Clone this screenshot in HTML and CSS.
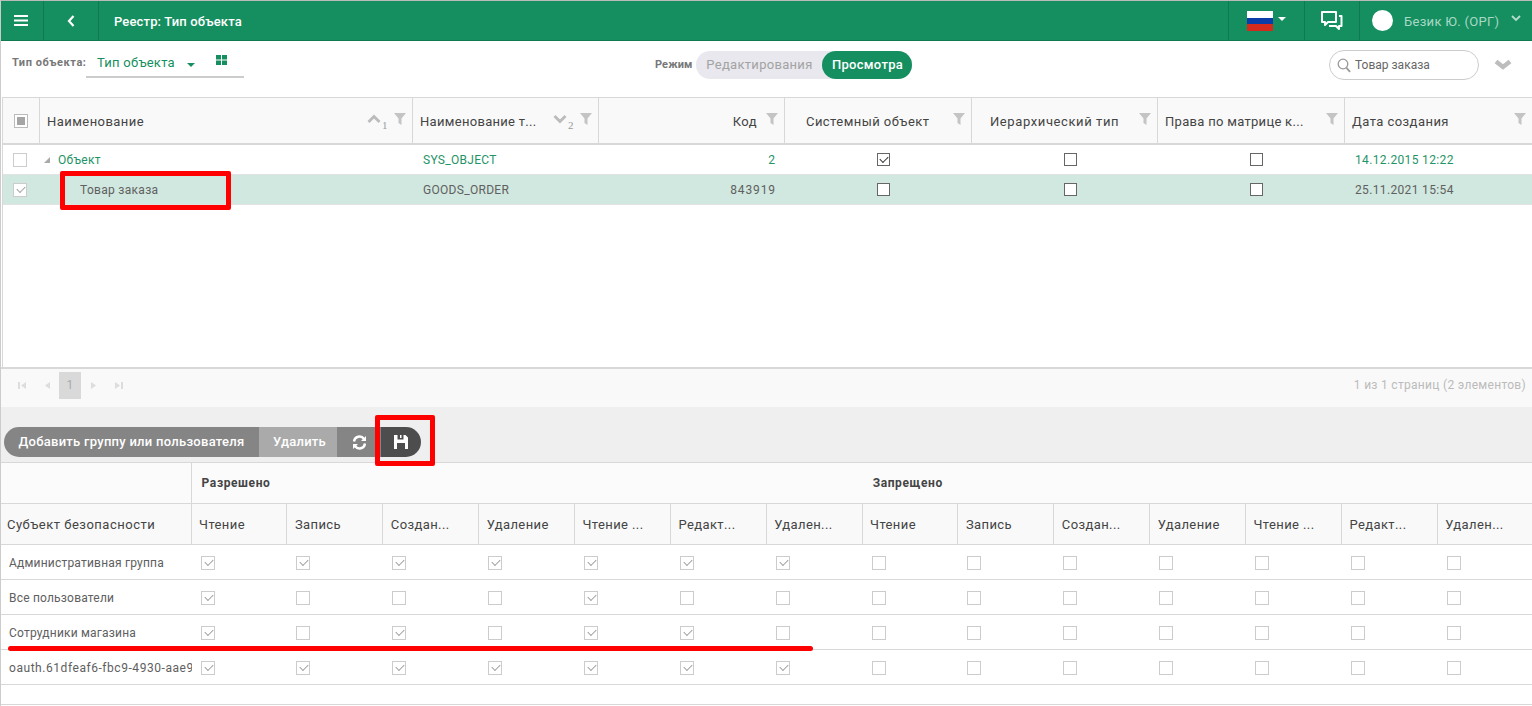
FILE: index.html
```html
<!DOCTYPE html>
<html lang="ru">
<head>
  <meta charset="UTF-8" />
  <title>Реестр: Тип объекта</title>
  <link rel="stylesheet" href="styles.css">
</head>
<body>

  <header class="topbar">
    <div class="bar-cell menu-cell">
      <svg width="14" height="11" viewBox="0 0 14 11"><path d="M0 0h14v2H0zM0 4.500h14v2H0zM0 9h14v2H0z" fill="#fff"/></svg>
    </div>
    <div class="bar-cell back-cell">
      <svg width="8" height="12" viewBox="0 0 8 12"><path d="M6.500 1L2 6l4.500 5" fill="none" stroke="#fff" stroke-width="2.200"/></svg>
    </div>
    <div class="bar-title">Реестр: Тип объекта</div>
    <div class="bar-cell flag-cell">
      <svg width="26" height="20" viewBox="0 0 26 20"><rect width="26" height="7" fill="#fff"/><rect y="7" width="26" height="6" fill="#0b3da8"/><rect y="13" width="26" height="7" fill="#d52b1e"/></svg>
      <span class="caret-white"></span>
    </div>
    <div class="bar-cell chat-cell">
      <svg width="23" height="22" viewBox="0 0 23 22" fill="none" stroke="#fff" stroke-width="2" stroke-linejoin="round"><path d="M2 2h14v10H8l-3 3v-3H2z"/><path d="M19 6h2.500v10H19v3l-3-3H9"/></svg>
    </div>
    <div class="user-cell">
      <span class="avatar"></span>
      <span class="user-name">Безик Ю. (ОРГ)</span>
      <svg width="10" height="7" viewBox="0 0 10 7"><path d="M1 1l4 4 4-4" fill="none" stroke="#b5dccd" stroke-width="1.800"/></svg>
    </div>
  </header>

  <div class="toolbar">
    <div class="type-picker">
      <span class="tool-label">Тип объекта:</span>
      <div class="type-select">
        <span class="type-value">Тип объекта</span>
        <span class="caret-green"></span>
        <svg class="grid-icon" width="11" height="10" viewBox="0 0 11 10"><path d="M0 0h5v4.500H0zM6 0h5v4.500H6zM0 5.500h5V10H0zM6 5.500h5V10H6z" fill="#158f60"/></svg>
      </div>
    </div>
    <div class="mode">
      <span class="tool-label">Режим</span>
      <div class="mode-switch">
        <span class="mode-off">Редактирования</span>
        <span class="mode-on">Просмотра</span>
      </div>
    </div>
    <div class="search-box">
      <svg width="14" height="15" viewBox="0 0 14 15" fill="none" stroke="#999" stroke-width="1.300"><circle cx="6" cy="6" r="4.800"/><path d="M9.500 9.800l3.500 4" stroke-width="1.800"/></svg>
      <span>Товар заказа</span>
    </div>
    <svg class="collapse-icon" width="18" height="11" viewBox="0 0 18 11"><path d="M2 2.500L9 8 16 2.500" fill="none" stroke="#bdbdbd" stroke-width="4.400"/></svg>
  </div>

  <!-- верхняя таблица -->
  <section class="types">
    <div class="types-row types-head">
      <div class="th center"><span class="cb cb-all"></span></div>
      <div class="th"><span class="th-text">Наименование</span><span class="sort"><svg width="14" height="10" viewBox="0 0 14 10"><path d="M1.500 8L7 2.500 12.500 8" fill="none" stroke="#bbb" stroke-width="2.800"/></svg><i>1</i></span><svg class="funnel" width="12" height="12"><use href="#funnel"/></svg></div>
      <div class="th"><span class="th-text th-cut">Наименование т...</span><span class="sort"><svg width="14" height="10" viewBox="0 0 14 10"><path d="M1.500 2L7 7.500 12.500 2" fill="none" stroke="#bbb" stroke-width="2.800"/></svg><i>2</i></span><svg class="funnel" width="12" height="12"><use href="#funnel"/></svg></div>
      <div class="th th-right"><span class="th-text">Код</span><svg class="funnel" width="12" height="12"><use href="#funnel"/></svg></div>
      <div class="th"><span class="th-text th-mid">Системный объект</span><svg class="funnel" width="12" height="12"><use href="#funnel"/></svg></div>
      <div class="th"><span class="th-text th-hier">Иерархический тип</span><svg class="funnel" width="12" height="12"><use href="#funnel"/></svg></div>
      <div class="th"><span class="th-text th-cut">Права по матрице к...</span><svg class="funnel" width="12" height="12"><use href="#funnel"/></svg></div>
      <div class="th"><span class="th-text">Дата создания</span><svg class="funnel" width="12" height="12"><use href="#funnel"/></svg></div>
    </div>
    <div class="types-body">
      <div class="types-row type-line link">
        <div class="td center row-check"><span class="cb cb-soft"></span></div>
        <div class="td"><span class="tree-arrow"></span>Объект</div>
        <div class="td code">SYS_OBJECT</div>
        <div class="td right num">2</div>
        <div class="td center flag"><span class="cb cb-dark on"></span></div>
        <div class="td center flag"><span class="cb cb-dark"></span></div>
        <div class="td center flag"><span class="cb cb-dark"></span></div>
        <div class="td date">14.12.2015 12:22</div>
      </div>
      <div class="types-row type-line selected">
        <div class="td center row-check"><span class="cb cb-soft on"></span></div>
        <div class="td child">Товар заказа</div>
        <div class="td code">GOODS_ORDER</div>
        <div class="td right num">843919</div>
        <div class="td center flag"><span class="cb cb-dark"></span></div>
        <div class="td center flag"><span class="cb cb-dark"></span></div>
        <div class="td center flag"><span class="cb cb-dark"></span></div>
        <div class="td date">25.11.2021 15:54</div>
      </div>
    </div>
  </section>

  <div class="pager">
    <div class="pager-nav">
      <svg width="9" height="9" viewBox="0 0 9 9"><path d="M0 1h2v7H0zM8 1v7L3 4.500z" fill="#ddd"/></svg>
      <svg class="pg-prev" width="6" height="9" viewBox="0 0 6 9"><path d="M5 1v7L0 4.500z" fill="#ddd"/></svg>
      <span class="pg-num">1</span>
      <svg class="pg-next" width="6" height="9" viewBox="0 0 6 9"><path d="M1 1v7l5-3.500z" fill="#ddd"/></svg>
      <svg class="pg-last" width="9" height="9" viewBox="0 0 9 9"><path d="M0 1v7l5-3.500zM6 1h2v7H6z" fill="#ddd"/></svg>
    </div>
    <span class="pager-info">1 из 1 страниц (2 элементов)</span>
  </div>

  <div class="actions">
    <div class="btn-group">
      <span class="btn btn-add">Добавить группу или пользователя</span>
      <span class="btn btn-del">Удалить</span>
      <span class="btn btn-sync">
        <svg width="15" height="15" viewBox="0 0 15 15" fill="none" stroke="#fff" stroke-width="2.400"><path d="M2 6.500A5.500 5.500 0 0 1 12 4"/><path d="M13 8.500A5.500 5.500 0 0 1 3 11"/><path d="M14 1v5H9zM1 14V9h5z" fill="#fff" stroke="none"/></svg>
      </span>
      <span class="btn btn-save">
        <svg width="14" height="14" viewBox="0 0 14 14"><path d="M0 0h11.500L14 2.500V14H0zM3.500 0v4.500h6V0H7.500v3H6V0zM3 8v6h8V8z" fill="#fff" fill-rule="evenodd"/></svg>
      </span>
    </div>
  </div>

  <!-- права -->
  <section class="perms">
    <div class="perm-groups">
      <div class="pg-blank"></div>
      <div class="pg-title">Разрешено</div>
      <div class="pg-title">Запрещено</div>
    </div>
    <div class="perm-row perm-head">
      <div>Субъект безопасности</div>
      <div>Чтение</div><div>Запись</div><div>Создан...</div><div>Удаление</div><div>Чтение ...</div><div>Редакт...</div><div>Удален...</div>
      <div>Чтение</div><div>Запись</div><div>Создан...</div><div>Удаление</div><div>Чтение ...</div><div>Редакт...</div><div>Удален...</div>
    </div>
    <div class="perm-row perm-line">
      <div class="subject">Административная группа</div>
      <div><span class="cb on"></span></div><div><span class="cb on"></span></div><div><span class="cb on"></span></div><div><span class="cb on"></span></div><div><span class="cb on"></span></div><div><span class="cb on"></span></div><div><span class="cb on"></span></div>
      <div><span class="cb"></span></div><div><span class="cb"></span></div><div><span class="cb"></span></div><div><span class="cb"></span></div><div><span class="cb"></span></div><div><span class="cb"></span></div><div><span class="cb"></span></div>
    </div>
    <div class="perm-row perm-line">
      <div class="subject">Все пользователи</div>
      <div><span class="cb on"></span></div><div><span class="cb"></span></div><div><span class="cb"></span></div><div><span class="cb"></span></div><div><span class="cb on"></span></div><div><span class="cb"></span></div><div><span class="cb"></span></div>
      <div><span class="cb"></span></div><div><span class="cb"></span></div><div><span class="cb"></span></div><div><span class="cb"></span></div><div><span class="cb"></span></div><div><span class="cb"></span></div><div><span class="cb"></span></div>
    </div>
    <div class="perm-row perm-line">
      <div class="subject">Сотрудники магазина</div>
      <div><span class="cb on"></span></div><div><span class="cb"></span></div><div><span class="cb on"></span></div><div><span class="cb"></span></div><div><span class="cb on"></span></div><div><span class="cb on"></span></div><div><span class="cb"></span></div>
      <div><span class="cb"></span></div><div><span class="cb"></span></div><div><span class="cb"></span></div><div><span class="cb"></span></div><div><span class="cb"></span></div><div><span class="cb"></span></div><div><span class="cb"></span></div>
    </div>
    <div class="perm-row perm-line">
      <div class="subject subject-id">oauth.61dfeaf6-fbc9-4930-aae9</div>
      <div><span class="cb on"></span></div><div><span class="cb on"></span></div><div><span class="cb on"></span></div><div><span class="cb on"></span></div><div><span class="cb on"></span></div><div><span class="cb on"></span></div><div><span class="cb on"></span></div>
      <div><span class="cb"></span></div><div><span class="cb"></span></div><div><span class="cb"></span></div><div><span class="cb"></span></div><div><span class="cb"></span></div><div><span class="cb"></span></div><div><span class="cb"></span></div>
    </div>
    <div class="perm-empty"></div>
  </section>

  <!-- красные пометки поверх скриншота -->
  <div class="mark mark-row"></div>
  <div class="mark mark-save"></div>
  <div class="mark-line"></div>

  <svg class="defs" width="0" height="0"><symbol id="funnel" viewBox="0 0 12 12"><path d="M0 0h12L7.500 5.500V12L4.500 10V5.500z" fill="#c4c4c4"/></symbol></svg>

</body>
</html>
```

FILE: styles.css
```css
:root {
  --green: #158f60;
  --line: #d8d8d8;
  --text: #444;
}

* {
  box-sizing: border-box;
}

html, body {
  height: 706px;
  overflow: hidden;
}

body {
  margin: 0;
  position: relative;
  font-family: Roboto, "Liberation Sans", sans-serif;
  font-size: 13px;
  letter-spacing: 0.3px;
  color: var(--text);
  background: #fff;
  border-left: 1px solid #ccc;
  border-top: 1px solid #bbb;
}

/* шапка */
.topbar {
  height: 40px;
  display: flex;
  align-items: stretch;
  background: var(--green);
  border-bottom: 1px solid #0f7a51;
}

.bar-cell {
  display: flex;
  align-items: center;
  justify-content: center;
  border-right: 1px solid #0f7a51;
}

.menu-cell {
  width: 43px;
  padding-right: 3px;
}

.back-cell {
  width: 55px;
}

.bar-title {
  flex: 1;
  padding-left: 15px;
  line-height: 41px;
  color: #fff;
  font-weight: 500;
  letter-spacing: 0.15px;
}

.flag-cell {
  width: 77px;
  gap: 5px;
  border-left: 1px solid #0f7a51;
}

.caret-white {
  border: 4px solid transparent;
  border-top-color: #fff;
  border-bottom-width: 0;
  margin-top: -3px;
}

.chat-cell {
  width: 55px;
  padding-right: 2px;
}

.user-cell {
  width: 172px;
  display: flex;
  align-items: center;
  padding-left: 12px;
}

.avatar {
  width: 21px;
  height: 21px;
  border-radius: 50%;
  background: #fff;
}

.user-name {
  margin: 1px 12px 0 11px;
  color: #a9d8c5;
  white-space: nowrap;
}

.user-cell svg {
  margin-top: -4px;
}

/* панель под шапкой */
.toolbar {
  height: 56px;
  display: flex;
  align-items: flex-start;
  position: relative;
  padding: 9px 0 0 11px;
}

.type-picker {
  display: flex;
  width: 643px;
}

.tool-label {
  font-size: 11px;
  font-weight: 700;
  color: #777;
  letter-spacing: 0.1px;
  line-height: 26px;
}

.type-picker .tool-label {
  width: 74px;
  letter-spacing: 0.55px;
  white-space: nowrap;
}

.type-select {
  width: 158px;
  height: 28px;
  padding-left: 11px;
  border-bottom: 2px solid #ccc;
  display: flex;
  line-height: 26px;
  position: relative;
}

.type-value {
  color: var(--green);
  letter-spacing: 0.25px;
}

.caret-green {
  border: 4px solid transparent;
  border-top-color: var(--green);
  border-bottom-width: 0;
  align-self: center;
  margin: 4px 0 0 12px;
}

.grid-icon {
  margin: 5px 0 0 21px;
}

.mode {
  display: flex;
  align-items: center;
  gap: 4px;
  width: 674px;
}

.mode .tool-label {
  margin-top: 1px;
}

.mode-switch {
  display: flex;
  height: 28px;
  width: 216px;
  margin-top: 1px;
  background: #e8e8ee;
  border-radius: 14px;
  line-height: 28px;
}

.mode-off {
  width: 126px;
  text-align: center;
  color: #a3a3a3;
}

.mode-on {
  width: 90px;
  text-align: center;
  color: #fff;
  font-weight: 500;
  background: var(--green);
  border-radius: 14px;
}

.search-box {
  width: 150px;
  height: 30px;
  border: 1px solid #ccc;
  border-radius: 15px;
  display: flex;
  align-items: center;
  gap: 4px;
  padding-left: 7px;
  font-size: 12px;
  letter-spacing: 0;
  color: #666;
}

.collapse-icon {
  margin: 9px 0 0 15px;
}

/* верхняя таблица */
.types {
  margin-left: 1px;
  border-top: 1px solid var(--line);
  border-left: 1px solid var(--line);
}

.types-row {
  display: grid;
  grid-template-columns: 37px 373px 186px 186px 187px 186px 187px 187px;
}

.types-head {
  height: 47px;
  background: #f9f9f9;
  border-bottom: 2px solid var(--line);
}

.th {
  position: relative;
  display: flex;
  align-items: center;
  padding: 1px 7px 0;
  border-right: 1px solid var(--line);
  color: #444;
  white-space: nowrap;
  letter-spacing: 0.45px;
}

.th:last-child {
  border-right: 0;
}

.th-cut {
  letter-spacing: 0.3px;
}

.th-right {
  justify-content: flex-end;
  padding-right: 27px;
}

.th-mid {
  margin-left: 14px;
}

.th-hier {
  margin-left: 11px;
  letter-spacing: 0.6px;
}

.center {
  justify-content: center;
}

.funnel {
  position: absolute;
  top: 15px;
  right: 6px;
}

.sort {
  position: absolute;
  top: 16px;
  right: 24px;
  display: flex;
}

.sort i {
  font: 11px "Liberation Serif", serif;
  color: #999;
  margin: 5px 0 0 1px;
}

.types-body {
  height: 222px;
}

.type-line {
  height: 30px;
  border-bottom: 1px solid #e2e2e2;
  font-size: 12px;
  letter-spacing: 0.3px;
}

.type-line.link {
  color: #1f9467;
}

.type-line.selected {
  background: #d0e8df;
  color: #606060;
}

.td {
  display: flex;
  align-items: center;
  padding: 0 8px;
  white-space: nowrap;
}

.td:nth-child(2) {
  padding-left: 4px;
}

.td.row-check {
  padding-right: 11px;
}

.td.code {
  padding-left: 10px;
}

.td.right {
  justify-content: flex-end;
  padding-right: 9px;
}

.td.num {
  letter-spacing: 0.9px;
}

.td.flag {
  padding-left: 18px;
}

.td.date {
  padding-left: 10px;
  letter-spacing: 0.35px;
}

.td.child {
  padding-left: 40px;
}

.tree-arrow {
  width: 0;
  height: 0;
  margin-right: 8px;
  border-left: 6px solid transparent;
  border-bottom: 6px solid #aaa;
}

/* чекбоксы */
.cb {
  display: block;
  position: relative;
  width: 14px;
  height: 14px;
  background: #fff;
  border: 1px solid #ccc;
}

.cb-dark {
  width: 13px;
  height: 13px;
  border-color: #666;
}

.cb.on::after {
  content: "";
  position: absolute;
  left: 3px;
  top: 2px;
  width: 7px;
  height: 4px;
  border-left: 1.500px solid #a0a0a0;
  border-bottom: 1.500px solid #a0a0a0;
  transform: rotate(-45deg);
}

.cb-dark.on::after {
  left: 2px;
  border-color: #333;
}

.cb-all {
  border-color: #bbb;
}

.cb-all::after {
  content: "";
  position: absolute;
  inset: 2px;
  background: #a5a5a5;
}

/* пагинация */
.pager {
  height: 40px;
  display: flex;
  justify-content: space-between;
  align-items: flex-start;
  padding: 0 6px 0 17px;
  background: #f9f9f9;
  border-top: 2px solid var(--line);
}

.pager-nav {
  display: flex;
  align-items: center;
  height: 27px;
  margin-top: 3px;
}

.pg-prev {
  margin: 0 8px 0 18px;
}

.pg-num {
  width: 22px;
  height: 27px;
  background: #d9d9d9;
  color: #aaa;
  text-align: center;
  line-height: 27px;
  font-size: 12px;
}

.pg-next {
  margin: 0 19px 0 9px;
}

.pager-info {
  font-size: 12px;
  color: #bbb;
  line-height: 32px;
}

/* кнопки */
.actions {
  height: 56px;
  background: #efefef;
  padding: 20px 0 0 3px;
  border-bottom: 1px solid var(--line);
}

.btn-group {
  display: flex;
  height: 30px;
  line-height: 30px;
  color: #fff;
  font-weight: 500;
  letter-spacing: 0.27px;
}

.btn {
  display: flex;
  align-items: center;
  justify-content: center;
}

.btn-add {
  width: 255px;
  background: #858585;
  border-radius: 15px 0 0 15px;
}

.btn-del {
  width: 78px;
  padding-left: 3px;
  background: #aaa;
}

.btn-sync {
  width: 44px;
  background: #858585;
}

.btn-save {
  width: 40px;
  background: #4d4d4d;
  border-radius: 0 15px 15px 0;
}

/* таблица прав */
.perm-groups,
.perm-row {
  display: grid;
}

.perm-groups {
  grid-template-columns: 190.6px 671.1px 1fr;
  height: 41px;
  background: #fbfbfb;
  border-bottom: 1px solid var(--line);
}

.pg-blank {
  border-right: 1px solid var(--line);
}

.pg-title {
  padding-left: 10px;
  line-height: 40px;
  font-size: 12px;
  font-weight: 700;
  letter-spacing: 0.6px;
}

.perm-row {
  grid-template-columns: 190.6px repeat(14, 95.87px);
}

.perm-head {
  height: 41px;
  background: #f9f9f9;
  border-bottom: 1px solid var(--line);
}

.perm-head > div {
  padding-left: 7.500px;
  line-height: 41px;
  border-right: 1px solid var(--line);
  white-space: nowrap;
  letter-spacing: 0.4px;
}

.perm-head > div:first-child {
  padding-left: 6px;
  letter-spacing: 0.5px;
}

.perm-line {
  height: 35px;
  border-bottom: 1px solid var(--line);
}

.perm-line > div {
  display: flex;
  align-items: center;
  padding-left: 9px;
  padding-top: 2px;
}

.perm-line > .subject {
  display: block;
  padding: 2px 0 0 8px;
  line-height: 33px;
  font-size: 12px;
  letter-spacing: 0.2px;
  color: #606060;
  overflow: hidden;
  white-space: nowrap;
}

.perm-line > .subject-id {
  letter-spacing: 0.55px;
}

.perm-empty {
  height: 20px;
  border-bottom: 1px solid var(--line);
}

/* пометки */
.mark {
  position: absolute;
  border: 5px solid #f00;
  border-radius: 2px;
}

.mark-row {
  left: 59px;
  top: 170px;
  width: 171px;
  height: 39px;
}

.mark-save {
  left: 374px;
  top: 414px;
  width: 60px;
  height: 51px;
}

.mark-line {
  position: absolute;
  left: 7px;
  top: 645px;
  width: 805px;
  height: 5px;
  background: #f00;
  border-radius: 3px;
}

.defs {
  position: absolute;
}
```
